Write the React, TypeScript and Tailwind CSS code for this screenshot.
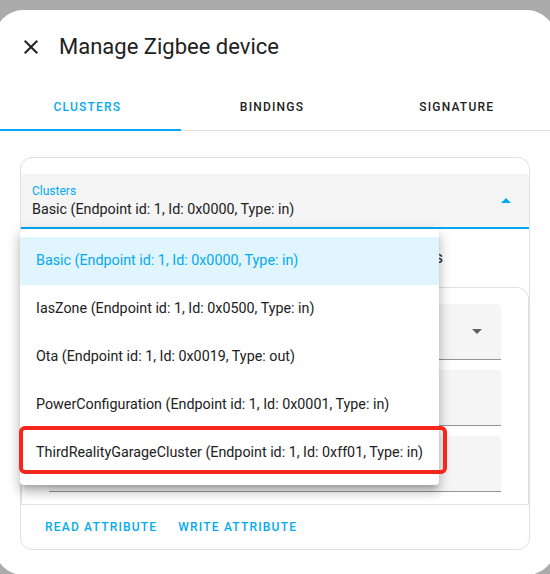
const tabs = ["Clusters", "Bindings", "Signature"];

const items = [
  "Basic (Endpoint id: 1, Id: 0x0000, Type: in)",
  "IasZone (Endpoint id: 1, Id: 0x0500, Type: in)",
  "Ota (Endpoint id: 1, Id: 0x0019, Type: out)",
  "PowerConfiguration (Endpoint id: 1, Id: 0x0001, Type: in)",
  "ThirdRealityGarageCluster (Endpoint id: 1, Id: 0xff01, Type: in)",
];

export default function App() {
  return (
    <div className="h-[574px] w-[550px] overflow-hidden bg-[#ababab] font-['Roboto',sans-serif] text-[#212121]">
      <div className="-ml-[5px] mt-[10px] flex h-[565px] w-[560px] flex-col overflow-hidden rounded-[28px] bg-white">
        {/* Header */}
        <div className="flex h-[74px] shrink-0 items-center pl-[24px]">
          <svg viewBox="0 0 24 24" className="h-6 w-6 fill-[#212121]">
            <path d="M19,6.41L17.59,5L12,10.59L6.41,5L5,6.41L10.59,12L5,17.59L6.41,19L12,13.41L17.59,19L19,17.59L13.41,12L19,6.41Z" />
          </svg>
          <div className="ml-4 text-[22px] leading-7">Manage Zigbee device</div>
        </div>

        {/* Tabs */}
        <div className="flex h-[45px] shrink-0 pr-[6px]">
          {tabs.map((t, i) => (
            <div
              key={t}
              className={
                i === 0
                  ? "flex flex-1 items-center justify-center text-[12px] font-medium uppercase tracking-[1.2px] text-[#03a9f4]"
                  : "flex flex-1 items-center justify-center text-[12px] font-medium uppercase tracking-[1.2px] text-[#212121]"
              }
            >
              {t}
            </div>
          ))}
        </div>
        <div className="flex h-[2px] shrink-0 items-end">
          <div className="h-[2px] w-[186px] bg-[#03a9f4]" />
          <div className="h-px flex-1 bg-[#e0e0e0]" />
        </div>

        {/* Card */}
        <div className="relative ml-[25px] mt-[26px] w-[510px] shrink-0 rounded-xl border border-[#e0e0e0] pt-4">
          {/* Clusters select */}
          <div className="flex h-[55px] items-center rounded-t-[4px] border-b-2 border-[#03a9f4] bg-[#f5f5f5] pl-[11px] pr-[18px]">
            <div className="flex-1">
              <div className="text-[12px] leading-4 text-[#03a9f4]">Clusters</div>
              <div className="text-[14.3px] leading-5">Basic (Endpoint id: 1, Id: 0x0000, Type: in)</div>
            </div>
            <div className="h-0 w-0 border-b-[5px] border-l-[5px] border-r-[5px] border-b-[#03a9f4] border-l-transparent border-r-transparent" />
          </div>

          {/* Help text (mostly under the open menu) */}
          <div className="flex h-[58px] items-center justify-end pr-[86px] text-[16px]">
            Select cluster to view attributes and commands
          </div>

          {/* Attributes card */}
          <div className="flex flex-col gap-[10px] rounded-t-xl border border-[#e0e0e0] px-[27px] pb-3 pt-4">
            <div className="flex h-[56px] items-center justify-end rounded-t-[4px] border-b border-[#949494] bg-[#f5f5f5] pr-[19px]">
              <div className="h-0 w-0 border-l-[5px] border-r-[5px] border-t-[5px] border-l-transparent border-r-transparent border-t-[#616161]" />
            </div>
            <div className="h-[56px] rounded-t-[4px] border-b border-[#949494] bg-[#f5f5f5]" />
            <div className="h-[56px] rounded-t-[4px] border-b border-[#949494] bg-[#f5f5f5]" />
          </div>

          {/* Actions */}
          <div className="flex h-[44px] items-center gap-[21px] pl-[24px] text-[12px] font-medium uppercase tracking-[1.2px] text-[#03a9f4]">
            <span>Read attribute</span>
            <span>Write attribute</span>
          </div>

          {/* Dropdown menu */}
          <div className="absolute left-[-1px] top-[71px] w-[419px] rounded-[4px] bg-white py-2 shadow-[0_5px_5px_-3px_rgba(0,0,0,0.2),0_8px_10px_1px_rgba(0,0,0,0.14),0_3px_14px_2px_rgba(0,0,0,0.12)]">
            {items.map((it, i) => (
              <div
                key={it}
                className={
                  i === 0
                    ? "flex h-[48px] items-center bg-[#e1f5fe] px-4 text-[14.3px] text-[#03a9f4]"
                    : "flex h-[48px] items-center px-4 text-[14.3px] text-[#212121]"
                }
              >
                {it}
              </div>
            ))}
          </div>

          {/* Red highlight annotation */}
          <div className="pointer-events-none absolute left-[-2px] top-[268px] h-[48px] w-[428px] rounded-[6px] border-4 border-[#f5261c]" />
        </div>
      </div>
    </div>
  );
}
